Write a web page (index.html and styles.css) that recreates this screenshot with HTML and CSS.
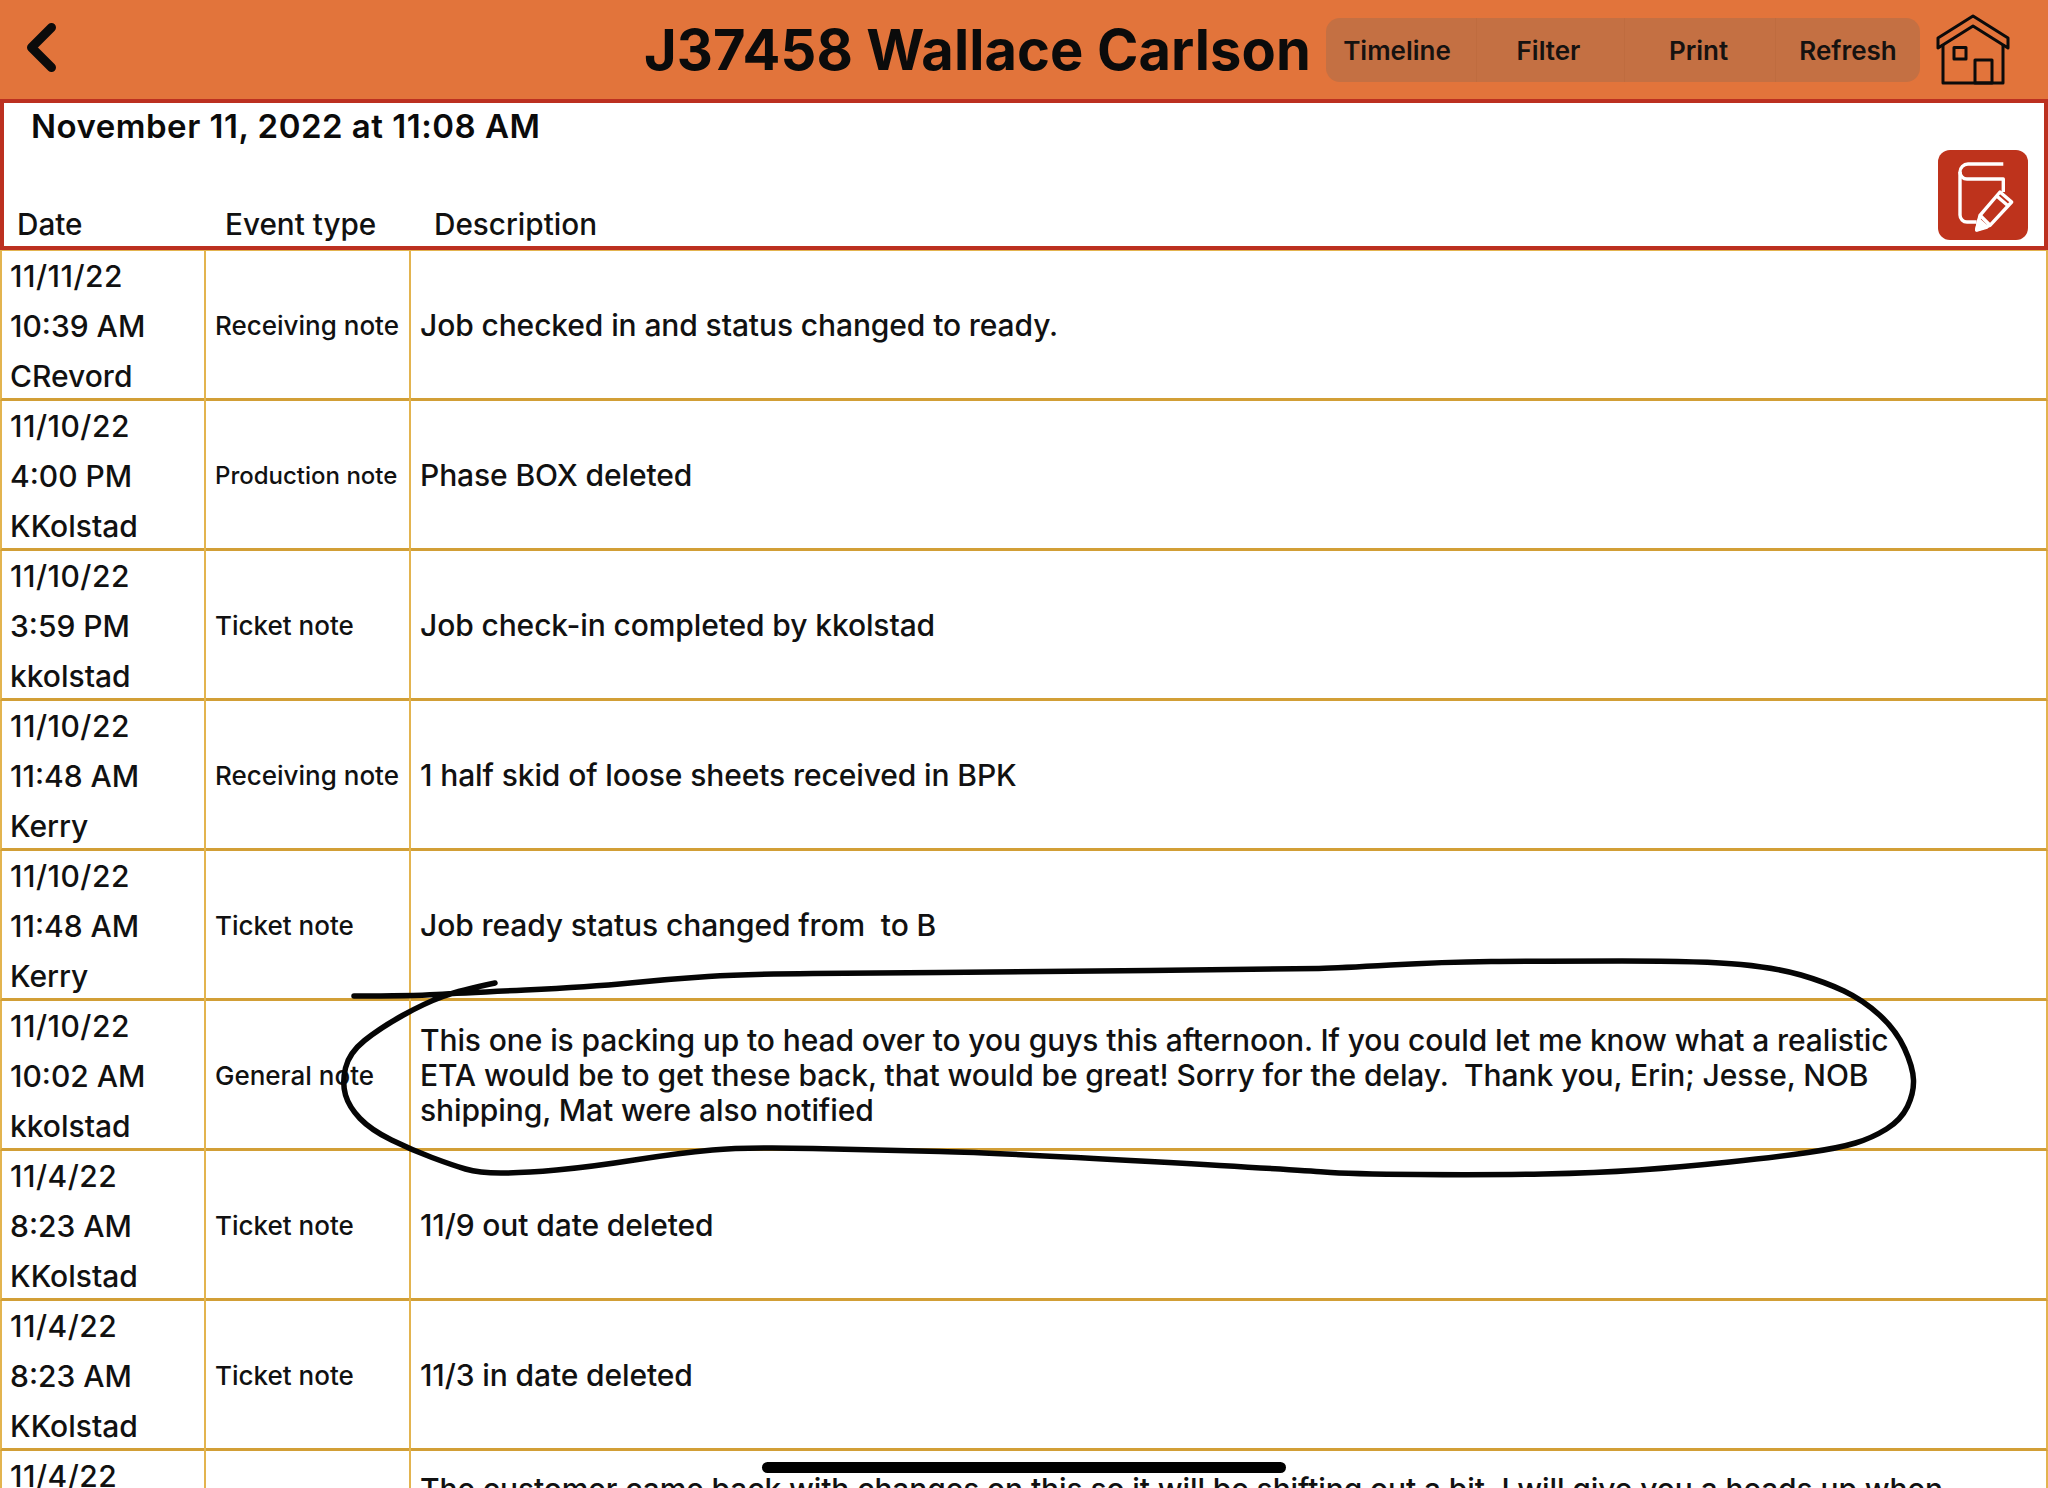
FILE: index.html
```html
<!DOCTYPE html>
<html lang="en">
<head>
<meta charset="utf-8">
<title>J37458 Wallace Carlson</title>
<link rel="stylesheet" href="styles.css">
</head>
<body>
<div class="app">
  <header class="topbar">
    <svg class="back" viewBox="0 0 36 56" aria-hidden="true"><path d="M27.5 8.5 L7.5 28.5 L27.5 48.5"/></svg>
    <h1 class="title">J37458 Wallace Carlson</h1>
    <nav class="segments">
      <span class="segment">Timeline</span>
      <span class="segment">Filter</span>
      <span class="segment">Print</span>
      <span class="segment">Refresh</span>
    </nav>
    <svg class="home" viewBox="0 0 70 70" aria-hidden="true">
      <path d="M0 23 L35 1 L70 23 V33 L35 11 L0 33 Z"/>
      <path d="M5 29 V68 H65 V29"/>
      <rect x="16" y="32.5" width="12" height="11.5"/>
      <rect x="37" y="45" width="17" height="23"/>
    </svg>
  </header>
  <section class="subhead">
    <div class="subhead-text">
      <div class="stamp">November 11, 2022 at 11:08 AM</div>
      <div class="columns">
        <span class="col-date">Date</span>
        <span class="col-type">Event type</span>
        <span class="col-desc">Description</span>
      </div>
    </div>
    <button class="edit" type="button" aria-label="Add note">
      <svg viewBox="0 0 90 90" aria-hidden="true">
        <path d="M65.3 14 H30 a8 8 0 0 0 -8 8 V65 a7 7 0 0 0 7 7 H38.7"/>
        <path d="M22 22 a7 7 0 0 0 7 7 H65.3 V42"/>
        <path d="M62 42 L73.7 52 L52 75.3 L38.7 79.7 L42 65.3 Z"/>
        <path d="M58.7 46 L70.3 56 M42 65.3 L52 75.3"/>
        <path class="tip" d="M38.7 80 L41 70 L49 77 Z"/>
      </svg>
    </button>
  </section>
  <main class="rows">
    <div class="row"><div class="who"><span class="day">11/11/22</span><span>10:39 AM</span><span>CRevord</span></div><div class="kind">Receiving note</div><div class="desc">Job checked in and status changed to ready.</div></div>
    <div class="row"><div class="who"><span class="day">11/10/22</span><span>4:00 PM</span><span>KKolstad</span></div><div class="kind kind-long">Production note</div><div class="desc">Phase BOX deleted</div></div>
    <div class="row"><div class="who"><span class="day">11/10/22</span><span>3:59 PM</span><span>kkolstad</span></div><div class="kind">Ticket note</div><div class="desc">Job check-in completed by kkolstad</div></div>
    <div class="row"><div class="who"><span class="day">11/10/22</span><span>11:48 AM</span><span>Kerry</span></div><div class="kind">Receiving note</div><div class="desc">1 half skid of loose sheets received in BPK</div></div>
    <div class="row"><div class="who"><span class="day">11/10/22</span><span>11:48 AM</span><span>Kerry</span></div><div class="kind">Ticket note</div><div class="desc">Job ready status changed from &nbsp;to B</div></div>
    <div class="row"><div class="who"><span class="day">11/10/22</span><span>10:02 AM</span><span>kkolstad</span></div><div class="kind">General note</div><div class="desc">This one is packing up to head over to you guys this afternoon. If you could let me know what a realistic ETA would be to get these back, that would be great! Sorry for the delay. &nbsp;Thank you, Erin; Jesse, NOB shipping, Mat were also notified</div></div>
    <div class="row"><div class="who"><span class="day">11/4/22</span><span>8:23 AM</span><span>KKolstad</span></div><div class="kind">Ticket note</div><div class="desc">11/9 out date deleted</div></div>
    <div class="row"><div class="who"><span class="day">11/4/22</span><span>8:23 AM</span><span>KKolstad</span></div><div class="kind">Ticket note</div><div class="desc">11/3 in date deleted</div></div>
    <div class="row"><div class="who who-cut"><span class="day">11/4/22</span></div><div class="kind"></div><div class="desc desc-cut">The customer came back with changes on this so it will be shifting out a bit. I will give you a heads up when</div></div>
  </main>
</div>
<svg class="ink" viewBox="0 0 2048 1488" aria-hidden="true">
  <path d="M354 996 Q412 996 436.5 994.5 Q461 993 525.5 990 Q590 987 630 983 Q670 979 708 976.5 Q746 974 813 973.5 Q880 973 940 972.5 Q1000 972 1150 970.5 Q1300 969 1319 968.5 Q1338 968 1390.5 965 Q1443 962 1491 961.5 Q1539 961 1622 961 Q1705 961 1741 964.5 Q1777 968 1801 975 Q1825 982 1844 991 Q1863 1000 1879.5 1015 Q1896 1030 1904.5 1048.5 Q1913 1067 1913.5 1080 Q1914 1093 1907.5 1106.5 Q1901 1120 1886.5 1129 Q1872 1138 1855.5 1143 Q1839 1148 1808 1152.5 Q1777 1157 1729.5 1162 Q1682 1167 1639 1170 Q1596 1173 1543.5 1174 Q1491 1175 1419.5 1174.5 Q1348 1174 1324 1172 Q1300 1170 1150 1161.5 Q1000 1153 940 1151.5 Q880 1150 813 1148.5 Q746 1147 712.5 1150 Q679 1153 634.5 1160 Q590 1167 556.5 1170 Q523 1173 501 1173 Q479 1173 465.5 1169 Q452 1165 432 1157.5 Q412 1150 391.5 1140 Q371 1130 360 1118.5 Q349 1107 345.5 1095 Q342 1083 345.5 1068 Q349 1053 364.5 1040.5 Q380 1028 402.5 1015.5 Q425 1003 443 996.5 Q461 990 495 983"/>
</svg>
<div class="home-indicator"></div>
</body>
</html>
```
FILE: styles.css
```css
* { box-sizing: border-box; }
html, body { margin: 0; height: 100%; }
body {
  height: 1488px;
  overflow: hidden;
  background: #fff;
  color: #111;
  font-family: Inter, "Liberation Sans", sans-serif;
  font-weight: 500;
}
.app { display: flex; flex-direction: column; height: 1488px; overflow: hidden; }

.topbar {
  flex: none;
  height: 99px;
  display: flex;
  align-items: center;
  padding: 0 40px 0 24px;
  background: #E2743B;
}
.back { width: 36px; height: 56px; margin-top: -5px; }
.back path { fill: none; stroke: #0b0b0b; stroke-width: 9; stroke-linecap: round; stroke-linejoin: round; }
.title {
  margin: 0 15px 0 auto;
  font-size: 56px;
  font-weight: 700;
  letter-spacing: 0.1px;
  line-height: 1;
  color: #0b0b0b;
  white-space: nowrap;
}
.segments {
  display: grid;
  grid-template-columns: 150px 148px 151px 145px;
  height: 64px;
  margin-top: 1px;
  border-radius: 14px;
  background: #C47043;
}
.segment {
  display: flex;
  align-items: center;
  justify-content: center;
  font-size: 26px;
  font-weight: 600;
  color: #161210;
}
.segment:nth-child(1) { padding-right: 8px; }
.segment:nth-child(2) { padding-right: 4px; }
.segment:nth-child(3) { padding-right: 3px; }
.segment + .segment { border-left: 1px solid #BF6C3F; }
.home { width: 70px; height: 70px; margin-left: 18px; overflow: visible; }
.home path, .home rect { fill: none; stroke: #0b0b0b; stroke-width: 3; stroke-linejoin: round; }

.subhead {
  flex: none;
  height: 151px;
  display: flex;
  justify-content: space-between;
  border: 4px solid #BC3020;
  background: #fff;
}
.subhead-text { display: flex; flex-direction: column; justify-content: space-between; flex: 1; }
.stamp { padding: 1px 0 0 27px; font-size: 33px; font-weight: 600; letter-spacing: 0.5px; line-height: 44px; color: #0b0b0b; }
.columns { display: grid; grid-template-columns: 208px 209px 1fr; padding: 0 0 2px 13px; font-size: 29.7px; line-height: 40px; }
.edit {
  align-self: flex-end;
  width: 90px;
  height: 90px;
  margin: 0 16px 6px 0;
  padding: 0;
  border: 0;
  border-radius: 12px;
  background: #BE331C;
}
.edit svg { display: block; width: 90px; height: 90px; }
.edit path { fill: none; stroke: #fff; stroke-width: 3.4; stroke-linejoin: round; }
.edit .tip { fill: #fff; }

.rows { flex: none; border-top: 1px solid #E3B44F; }
.row {
  display: grid;
  grid-template-columns: 204px 205px 1fr;
  height: 150px;
  border-bottom: 3px solid #D29F36;
  border-left: 2px solid #E3B44F;
  border-right: 2px solid #E3B44F;
}
.who {
  display: flex;
  flex-direction: column;
  justify-content: center;
  padding-left: 8px;
  border-right: 2px solid #E3B44F;
  font-size: 30px;
  line-height: 50px;
}
.who-cut { justify-content: flex-start; }
.day { letter-spacing: 0.5px; }
.kind {
  display: flex;
  align-items: center;
  padding: 0 0 2px 9px;
  border-right: 2px solid #E3B44F;
  font-size: 26px;
  white-space: nowrap;
}
.kind-long { font-size: 24px; }
.desc {
  align-self: center;
  margin-bottom: 2px;
  padding: 0 99px 0 9px;
  font-size: 30px;
  letter-spacing: -0.11px;
  line-height: 35px;
}
.desc-cut { align-self: start; padding-top: 21px; }

.ink { position: absolute; left: 0; top: 0; width: 2048px; height: 1488px; pointer-events: none; }
.ink path { fill: none; stroke: #050505; stroke-width: 5.5; stroke-linecap: round; stroke-linejoin: round; }
.home-indicator {
  position: absolute;
  left: 762px;
  top: 1462px;
  width: 524px;
  height: 11px;
  border-radius: 6px;
  background: #000;
}
```
